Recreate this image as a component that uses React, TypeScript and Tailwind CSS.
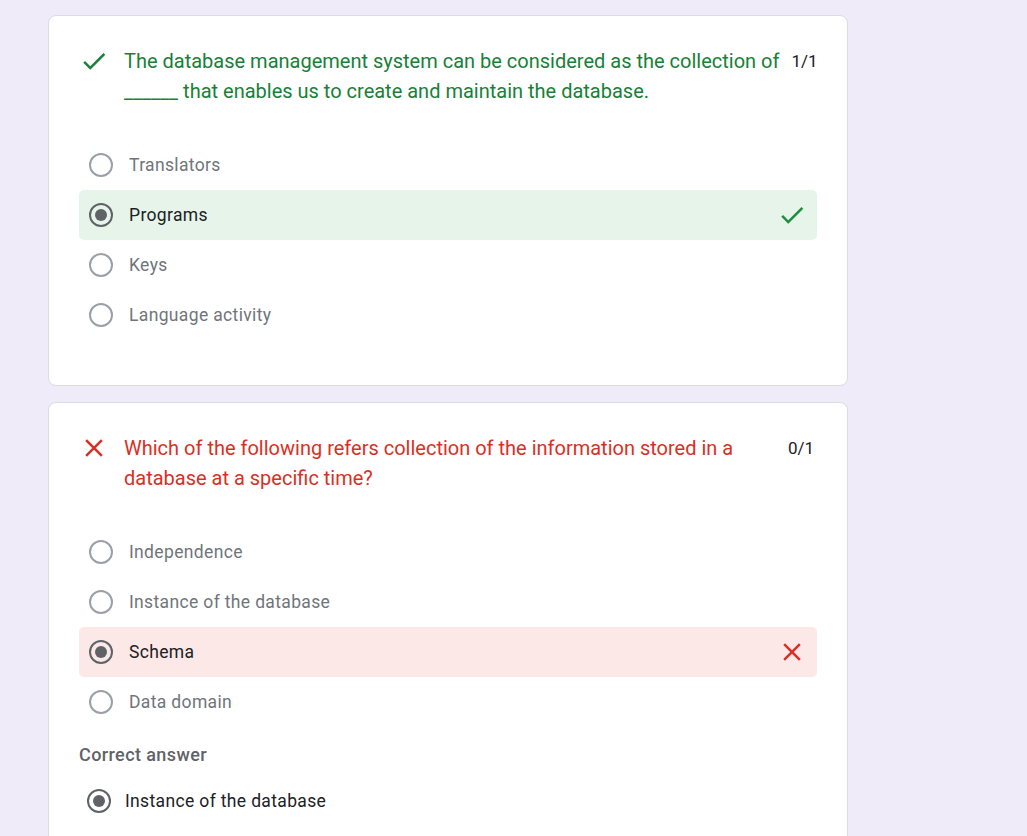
import React from "react";

const font = { fontFamily: "Roboto, 'Noto Sans', Arial, sans-serif" };

function CheckIcon({ className }: { className?: string }) {
  return (
    <svg viewBox="0 0 24 24" className={className} fill="currentColor">
      <path d="M9 16.17L4.83 12l-1.42 1.41L9 19 21 7l-1.41-1.41z" />
    </svg>
  );
}

function CloseIcon({ className }: { className?: string }) {
  return (
    <svg viewBox="0 0 24 24" className={className} fill="currentColor">
      <path d="M19 6.41L17.59 5 12 10.59 6.41 5 5 6.41 10.59 12 5 17.59 6.41 19 12 13.41 17.59 19 19 17.59 13.41 12z" />
    </svg>
  );
}

function Radio({ checked }: { checked?: boolean }) {
  return (
    <div
      className={
        "w-[24px] h-[24px] rounded-full flex items-center justify-center shrink-0 " +
        (checked ? "border-[2.5px] border-[#5f6368]" : "border-[2px] border-[#9aa0a6]")
      }
    >
      {checked && <div className="w-[12px] h-[12px] rounded-full bg-[#5f6368]" />}
    </div>
  );
}

type Opt = { label: string; state?: "correct" | "wrong" };

function Option({ label, state }: Opt) {
  const bg = state === "correct" ? "bg-[#e6f4ea]" : state === "wrong" ? "bg-[#fce8e6]" : "";
  return (
    <div className={"h-[50px] flex items-center pl-[10px] pr-[10px] rounded-[5px] " + bg}>
      <Radio checked={!!state} />
      <span
        className={
          "ml-[16px] text-[17.5px] leading-[25px] tracking-[0.35px] flex-1 " +
          (state ? "text-[#202124]" : "text-[#70757a]")
        }
      >
        {label}
      </span>
      {state === "correct" && <CheckIcon className="w-[30px] h-[30px] text-[#1e8e3e]" />}
      {state === "wrong" && <CloseIcon className="w-[30px] h-[30px] text-[#d93025]" />}
    </div>
  );
}

function Header({
  ok,
  lines,
  score,
}: {
  ok: boolean;
  lines: string[];
  score: string;
}) {
  const color = ok ? "text-[#188038]" : "text-[#d93025]";
  return (
    <div className="flex items-start">
      <div className="w-[30px] h-[30px] shrink-0">
        {ok ? (
          <CheckIcon className="w-[30px] h-[30px] text-[#188038]" />
        ) : (
          <CloseIcon className="w-[30px] h-[30px] text-[#d93025]" />
        )}
      </div>
      <div className={"ml-[15px] flex-1 text-[20px] leading-[30px] tracking-[0px] " + color}>
        {lines.map((l, i) => (
          <div key={i} className="whitespace-nowrap">
            {l}
          </div>
        ))}
      </div>
      <div className="ml-[12px] text-[17px] leading-[30px] text-[#202124] pr-[3px]">{score}</div>
    </div>
  );
}

export default function App() {
  return (
    <div className="min-h-[836px] w-full bg-[#f0ebf8] overflow-hidden" style={font}>
      <div className="ml-[48px] pt-[15px] w-[800px] flex flex-col gap-[16px]">
        <div className="bg-white border border-[#dadce0] rounded-[8px] px-[30px] pt-[30px] pb-[45px]">
          <Header
            ok
            lines={[
              "The database management system can be considered as the collection of",
              "______ that enables us to create and maintain the database.",
            ]}
            score="1/1"
          />
          <div className="mt-[34px] flex flex-col">
            <Option label="Translators" />
            <Option label="Programs" state="correct" />
            <Option label="Keys" />
            <Option label="Language activity" />
          </div>
        </div>

        <div className="bg-white border border-[#dadce0] rounded-[8px] px-[30px] pt-[30px] pb-[45px]">
          <Header
            ok={false}
            lines={[
              "Which of the following refers collection of the information stored in a",
              "database at a specific time?",
            ]}
            score="0/1"
          />
          <div className="mt-[34px] flex flex-col">
            <Option label="Independence" />
            <Option label="Instance of the database" />
            <Option label="Schema" state="wrong" />
            <Option label="Data domain" />
          </div>
          <div className="mt-[15px] text-[18px] leading-[25px] font-medium text-[#5f6368] tracking-[0.4px]">
            Correct answer
          </div>
          <div className="mt-[9px] h-[50px] flex items-center pl-[8px]">
            <Radio checked />
            <span className="ml-[14px] text-[17.5px] leading-[25px] tracking-[0.35px] text-[#202124]">
              Instance of the database
            </span>
          </div>
        </div>
      </div>
    </div>
  );
}
